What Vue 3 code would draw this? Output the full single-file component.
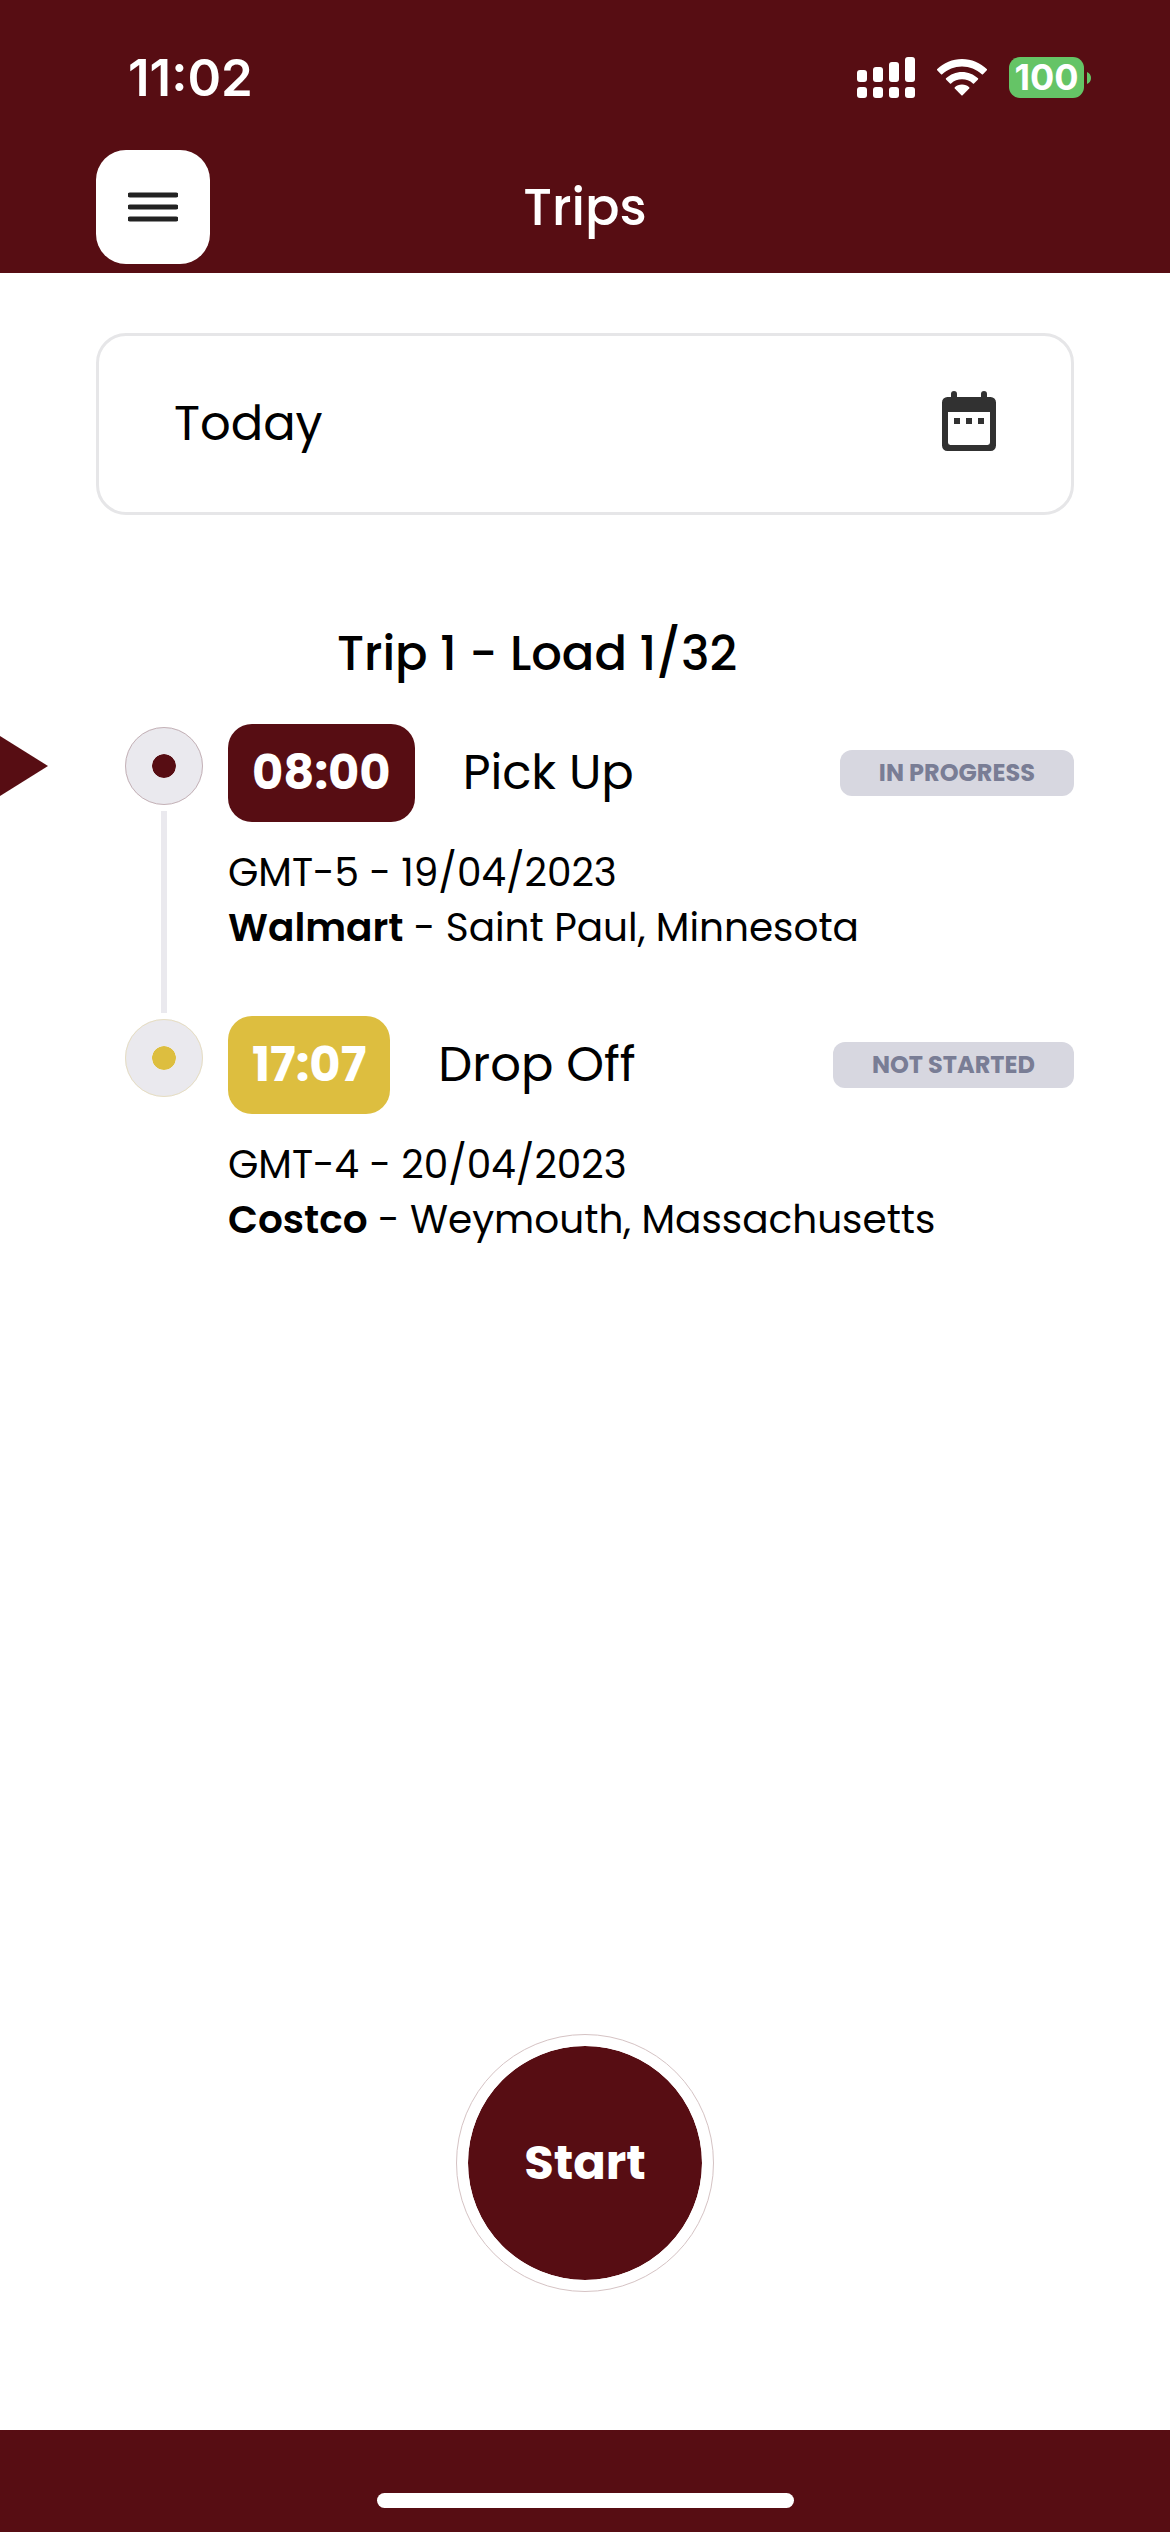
<script setup>
const signalBars = [
  { x: 0, y: 13, h: 12 },
  { x: 16, y: 10, h: 15 },
  { x: 32, y: 5, h: 20 },
  { x: 48, y: 0, h: 25 },
]

const stops = [
  {
    time: '08:00',
    kind: 'Pick Up',
    status: 'IN PROGRESS',
    date: 'GMT-5 - 19/04/2023',
    company: 'Walmart',
    place: 'Saint Paul, Minnesota',
    tone: 'maroon',
    current: true,
  },
  {
    time: '17:07',
    kind: 'Drop Off',
    status: 'NOT STARTED',
    date: 'GMT-4 - 20/04/2023',
    company: 'Costco',
    place: 'Weymouth, Massachusetts',
    tone: 'gold',
    current: false,
  },
]
</script>

<template>
  <div class="screen">
    <header class="header">
      <div class="status-bar">
        <span class="clock">11:02</span>
        <div class="indicators">
          <svg class="signal" viewBox="0 0 58 41" aria-hidden="true">
            <g v-for="bar in signalBars" :key="bar.x">
              <rect :x="bar.x" :y="bar.y" width="10" :height="bar.h" rx="3" />
              <rect :x="bar.x" y="30" width="10" height="11" rx="3" />
            </g>
          </svg>
          <svg class="wifi" viewBox="0 0 50 37" aria-hidden="true">
            <path d="M25 0C15.500 0 6.600 3.700 0 10.300Q-.3 10.800 .2 11.300L4 15.300Q4.600 15.800 5.200 15.300C10.500 10.200 17.500 7.400 25 7.400S39.500 10.200 44.800 15.300Q45.400 15.800 46 15.300L49.800 11.300Q50.300 10.800 50 10.300C43.400 3.700 34.500 0 25 0Z" />
            <path d="M25 13C19 13 13.300 15.300 9 19.300Q8.500 19.800 9 20.400L13 24.400Q13.500 24.900 14.100 24.400C17.100 21.700 20.900 20.300 25 20.300S32.900 21.700 35.900 24.400Q36.500 24.900 37 24.400L41 20.400Q41.500 19.800 41 19.300C36.700 15.300 31 13 25 13Z" />
            <path d="M25 25.600C22.100 25.600 19.700 26.600 17.800 28.200Q17.300 28.800 17.800 29.400L24.400 36.200Q25 36.800 25.600 36.200L32.200 29.400Q32.700 28.800 32.200 28.200C30.300 26.600 27.900 25.600 25 25.600Z" />
          </svg>
          <div class="battery">
            <span class="battery-body">100</span>
            <svg class="battery-tip" viewBox="0 0 4 12" aria-hidden="true">
              <path d="M0 0C2.500 1 4 3.300 4 6S2.500 11 0 12Z" />
            </svg>
          </div>
        </div>
      </div>
      <div class="nav">
        <button class="menu" type="button" aria-label="Open menu">
          <svg viewBox="0 0 50 30" aria-hidden="true">
            <path d="M2 3H48M2 15H48M2 27H48" />
          </svg>
        </button>
        <h1 class="title">Trips</h1>
      </div>
    </header>

    <main class="main">
      <button class="date-picker" type="button">
        <span>Today</span>
        <svg viewBox="0 0 24 24" aria-hidden="true">
          <path
            fill-rule="evenodd"
            d="M6 3V2a1 1 0 0 1 2 0V3H16V2a1 1 0 0 1 2 0V3H19.200A1.800 1.800 0 0 1 21 4.800V19.200A1.800 1.800 0 0 1 19.200 21H4.800A1.800 1.800 0 0 1 3 19.200V4.800A1.800 1.800 0 0 1 4.800 3ZM5 8V18.200A.8 .8 0 0 0 5.800 19H18.200A.8 .8 0 0 0 19 18.200V8ZM7 10H9V12H7ZM11 10H13V12H11ZM15 10H17V12H15Z"
          />
        </svg>
      </button>

      <h2 class="trip-title">Trip 1 - Load 1/32</h2>

      <ol class="stops">
        <li v-for="stop in stops" :key="stop.time" class="stop" :class="stop.tone">
          <div class="pointer">
            <svg v-if="stop.current" viewBox="0 0 48 60" aria-hidden="true">
              <path d="M0 0L48 30L0 60Z" />
            </svg>
          </div>
          <div class="rail">
            <span class="dot"></span>
            <span class="line"></span>
          </div>
          <div class="content">
            <div class="summary">
              <time class="time">{{ stop.time }}</time>
              <span class="kind">{{ stop.kind }}</span>
              <span class="status">{{ stop.status }}</span>
            </div>
            <p class="details">
              {{ stop.date }}<br />
              <strong>{{ stop.company }}</strong> - {{ stop.place }}
            </p>
          </div>
        </li>
      </ol>

      <button class="start" type="button">Start</button>
    </main>

    <footer class="footer">
      <span class="home-bar"></span>
    </footer>
  </div>
</template>

<style>
body {
  margin: 0;
  background: #fff;
}
</style>

<style scoped>
.screen {
  --maroon: #570d13;
  --gold: #ddbe3f;
  --mist: #eae9ee;
  display: flex;
  flex-direction: column;
  min-height: 100vh;
  color: #000;
  font-family: Poppins, Inter, sans-serif;
  font-size: 48px;
}

button {
  padding: 0;
  border: 0;
  color: inherit;
  font: inherit;
  cursor: pointer;
}

h1,
h2,
p,
ol {
  margin: 0;
  padding: 0;
}

svg {
  display: block;
}

.header {
  background: var(--maroon);
  color: #fff;
}

.status-bar {
  box-sizing: border-box;
  display: flex;
  align-items: center;
  justify-content: space-between;
  height: 150px;
  padding: 5px 79px 0 128px;
}

.clock {
  font-family: Inter, sans-serif;
  font-size: 51px;
  font-weight: 600;
}

.indicators {
  display: flex;
  align-items: center;
  gap: 22px;
  fill: #fff;
}

.signal {
  width: 58px;
  height: 41px;
}

.wifi {
  width: 50px;
  height: 37px;
}

.battery {
  display: flex;
  align-items: center;
  gap: 3px;
}

.battery-body {
  width: 75px;
  border-radius: 11px;
  background: #65c466;
  font-family: Inter, sans-serif;
  font-size: 36px;
  font-weight: 700;
  line-height: 41px;
  text-align: center;
}

.battery-tip {
  width: 4px;
  height: 12px;
  fill: #65c466;
}

.nav {
  display: grid;
  grid-template-columns: 1fr auto 1fr;
  align-items: center;
  padding: 0 96px 9px;
}

.menu {
  display: flex;
  align-items: center;
  justify-content: center;
  width: 114px;
  height: 114px;
  border-radius: 30px;
  background: #fff;
}

.menu svg {
  width: 50px;
  height: 30px;
  fill: none;
  stroke: #222;
  stroke-width: 5;
  stroke-linecap: round;
}

.menu path {
  shape-rendering: geometricPrecision;
}

.title {
  font-size: 51px;
  font-weight: 500;
  line-height: 60px;
}

.main {
  flex: 1;
  display: flex;
  flex-direction: column;
  padding: 60px 0 138px;
}

.date-picker {
  box-sizing: border-box;
  display: flex;
  align-items: center;
  justify-content: space-between;
  height: 182px;
  margin: 0 96px;
  padding: 0 66px 0 75px;
  border: 3px solid #e6e6e8;
  border-radius: 30px;
  background: #fff;
}

.date-picker svg {
  width: 72px;
  height: 72px;
  fill: #313131;
}

.trip-title {
  margin: 109px 192px 40px 96px;
  font-size: 48px;
  font-weight: 500;
  line-height: 60px;
  text-align: center;
}

.stops {
  list-style: none;
}

.stop {
  display: grid;
  grid-template-columns: 125px 78px 1fr;
  min-height: 292px;
  padding-right: 96px;
}

.maroon {
  --tone: var(--maroon);
}

.gold {
  --tone: var(--gold);
}

.pointer {
  padding-top: 12px;
}

.pointer svg {
  width: 48px;
  height: 60px;
  fill: var(--maroon);
}

.rail {
  display: flex;
  flex-direction: column;
  align-items: center;
  gap: 6px;
  padding: 3px 0;
}

.dot {
  box-sizing: border-box;
  width: 78px;
  height: 78px;
  border: 27px solid var(--mist);
  border-radius: 50%;
  outline: 1px solid color-mix(in srgb, var(--tone) 25%, var(--mist));
  outline-offset: -1px;
  background: var(--tone);
  background-clip: padding-box;
}

.line {
  flex: 1;
  width: 6px;
  background: var(--mist);
}

.stop:last-child .line {
  display: none;
}

.content {
  padding-left: 25px;
}

.summary {
  display: flex;
  align-items: center;
}

.time {
  padding: 0 24px;
  border-radius: 24px;
  background: var(--tone);
  color: #fff;
  font-weight: 700;
  line-height: 98px;
}

.kind {
  margin-left: 48px;
}

.status {
  margin-left: auto;
  padding: 0 39px;
  border-radius: 12px;
  background: #d7d7e0;
  color: #797d95;
  font-size: 24px;
  font-weight: 700;
  line-height: 46px;
}

.details {
  margin-top: 23px;
  font-size: 39px;
  line-height: 55px;
}

.details strong {
  font-weight: 600;
}

.start {
  width: 258px;
  height: 258px;
  margin: auto auto 0;
  border: 12px solid #fff;
  border-radius: 50%;
  outline: 1px solid color-mix(in srgb, var(--maroon) 25%, #fff);
  outline-offset: -1px;
  background: var(--maroon);
  background-clip: padding-box;
  color: #fff;
  font-weight: 700;
}

.footer {
  display: flex;
  justify-content: center;
  padding: 63px 0 24px;
  background: var(--maroon);
}

.home-bar {
  width: 417px;
  height: 15px;
  border-radius: 8px;
  background: #fff;
}
</style>
